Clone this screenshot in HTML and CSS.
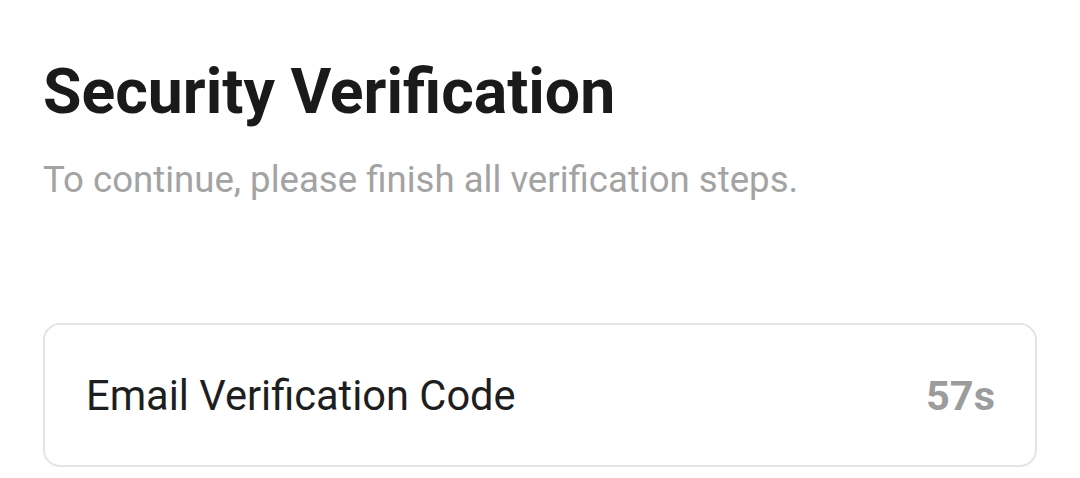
FILE: index.html
```html
<!DOCTYPE html>
<html>
<head>
<meta charset="utf-8">
<link rel="stylesheet" href="styles.css">
</head>
<body>
<main class="page">
  <h1 class="title">Security Verification</h1>
  <p class="subtitle">To continue, please finish all verification steps.</p>
  <div class="field">
    <span class="label">Email Verification Code</span>
    <span class="timer">57s</span>
  </div>
</main>
</body>
</html>
```

FILE: styles.css
```css
* { box-sizing: border-box; }
html, body { margin: 0; padding: 0; background: #fff; }
body { font-family: Roboto, "Noto Sans", sans-serif; }
.page {
  display: flex;
  flex-direction: column;
  padding: 55px 43px 0 43px;
}
.title {
  margin: 0;
  font-size: 62.5px;
  font-weight: 700;
  line-height: 74px;
  color: #1a1a1a;
}
.subtitle {
  margin: 29px 0 0 0;
  font-size: 36.6px;
  line-height: 43px;
  color: #a3a3a3;
}
.field {
  margin-top: 122px;
  width: 994px;
  height: 144px;
  border: 2px solid #e5e5e5;
  border-radius: 17px;
  display: flex;
  align-items: center;
  justify-content: space-between;
  padding: 0 40px 0 41px;
}
.label {
  font-size: 41.6px;
  color: #1e1e1e;
}
.timer {
  font-size: 41.5px;
  font-weight: 700;
  color: #9c9c9c;
}
```
